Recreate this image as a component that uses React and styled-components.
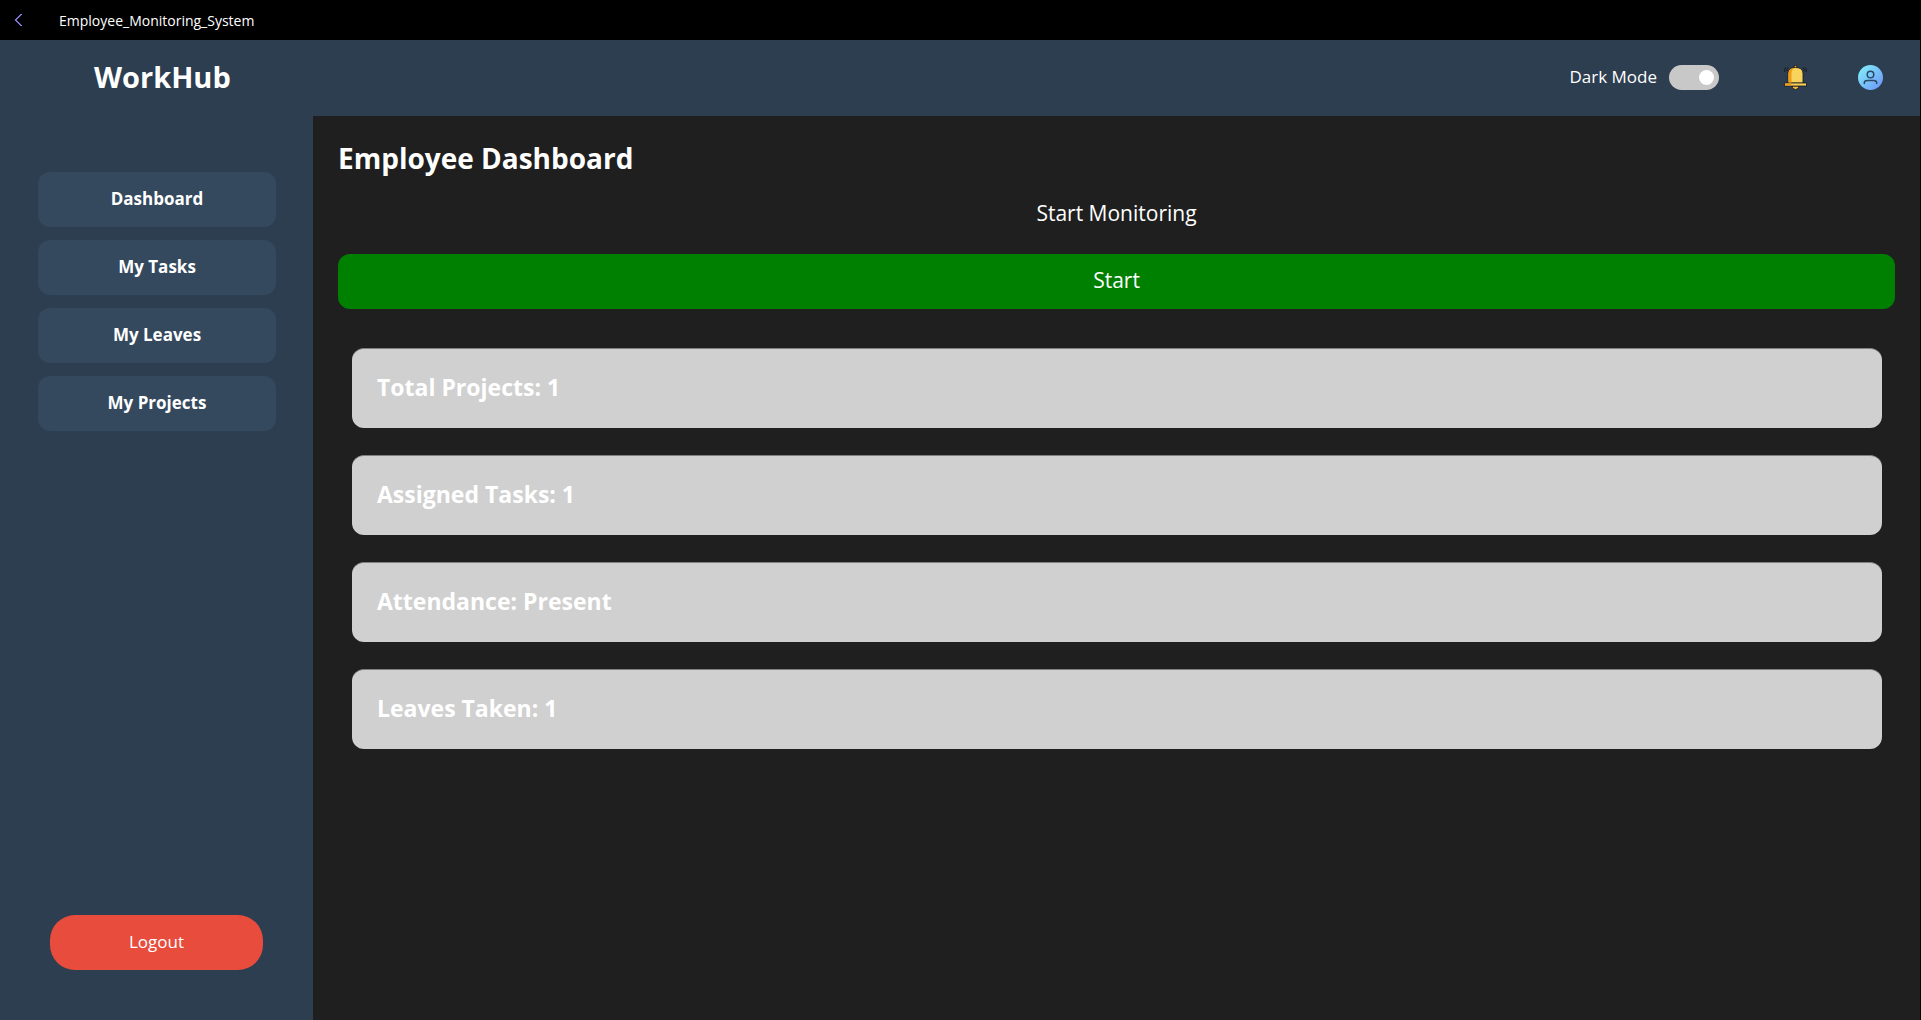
import React, { useState } from "react";
import styled, { createGlobalStyle } from "styled-components";

const GlobalStyle = createGlobalStyle`
  *, *::before, *::after { box-sizing: border-box; }
  body {
    margin: 0;
    background: #000;
    color: #fff;
    font-family: "Segoe UI", "Open Sans", "Noto Sans", sans-serif;
  }
  h1, h2, h3, p { margin: 0; }
  button { font-family: inherit; color: inherit; border: 0; cursor: pointer; }
`;

const Window = styled.div`
  display: flex;
  flex-direction: column;
  min-height: 100vh;
  padding-right: 1px;
`;

const TitleBar = styled.div`
  display: flex;
  align-items: center;
  gap: 36px;
  height: 40px;
  padding-left: 14px;
  background: #000;
  font-size: 14px;
`;

const BackButton = styled.button`
  display: flex;
  padding: 0;
  background: none;
  color: #9c92ff;
`;

const Header = styled.header`
  display: flex;
  align-items: center;
  height: 76px;
  padding: 0 37px 2px 0;
  background: #2c3e50;
`;

const Brand = styled.h1`
  width: 313px;
  padding-left: 94px;
  font-size: 29px;
  line-height: 36px;
  font-weight: 700;
`;

const HeaderTools = styled.div`
  display: flex;
  align-items: center;
  gap: 50px;
  margin-left: auto;
`;

const ToggleLabel = styled.label`
  display: flex;
  align-items: center;
  gap: 12px;
  margin-right: 14px;
  font-size: 17px;
  line-height: 24px;
`;

const Toggle = styled.input`
  appearance: none;
  display: flex;
  align-items: center;
  width: 50px;
  height: 25px;
  margin: 0;
  padding: 0 5px;
  border-radius: 13px;
  background: #c8c8c8;
  cursor: pointer;

  &::before {
    content: "";
    width: 15px;
    height: 15px;
    border-radius: 50%;
    background: #fff;
  }
  &:checked::before { margin-left: auto; }
`;

const IconButton = styled.button`
  display: flex;
  padding: 0;
  background: none;
`;

const Body = styled.div`
  display: flex;
  flex: 1;
`;

const Sidebar = styled.aside`
  display: flex;
  flex-direction: column;
  justify-content: space-between;
  width: 313px;
  padding: 56px 37px 50px 38px;
  background: #2c3e50;
`;

const Nav = styled.nav`
  display: flex;
  flex-direction: column;
  gap: 13px;
`;

const SideButton = styled.button`
  height: 55px;
  padding: 0 0 2px;
  border-radius: 12px;
  background: #34495e;
  font-size: 17px;
  line-height: 24px;
  font-weight: 700;
`;

const LogoutButton = styled(SideButton)`
  margin: 0 13px 0 12px;
  border-radius: 25px;
  background: #e74c3c;
  font-weight: 400;
`;

const Main = styled.main`
  flex: 1;
  padding: 24px 25px;
  background: #1f1f1f;
`;

const Heading = styled.h2`
  font-size: 28px;
  line-height: 36px;
  font-weight: 700;
`;

const Prompt = styled.p`
  margin: 20px 0 24px;
  font-size: 21px;
  line-height: 34px;
  text-align: center;
`;

const StartButton = styled.button`
  display: block;
  width: 100%;
  height: 55px;
  padding: 0 0 4px;
  border-radius: 12px;
  background: #008000;
  font-size: 21px;
  line-height: 30px;
`;

const Cards = styled.section`
  display: flex;
  flex-direction: column;
  gap: 27px;
  margin: 39px 13px 0 14px;
`;

const Card = styled.article`
  height: 80px;
  padding: 22px 25px;
  border-top: 1px solid #808080;
  border-radius: 12px;
  background: #d0d0d0;
`;

const CardTitle = styled.h3`
  font-size: 23px;
  line-height: 32px;
  font-weight: 700;
`;

function BackIcon() {
  return (
    <svg width="9" height="14" viewBox="0 0 9 14" fill="none" stroke="currentColor" strokeWidth="1.2" aria-hidden="true">
      <path d="M8 1.500H7L1.500 7L7 12.500H8" />
    </svg>
  );
}

function BellIcon() {
  return (
    <svg width="25" height="25" viewBox="0 0 25 25" aria-hidden="true">
      <g fill="none" stroke="#15191f" strokeWidth="1">
        <path d="M2.500 2.500Q1 4.500 2 7M5 2.500Q3.500 4 4 6M22.500 2.500Q24 4.500 23 7M20 2.500Q21.500 4 21 6" />
      </g>
      <g stroke="#15191f" strokeWidth=".8" strokeLinejoin="round">
        <circle cx="12.500" cy="1.900" r="1.500" fill="#f39c12" />
        <path d="M9.500 21h6v1.500q-1 2-3 2T9.500 22.500z" fill="#f5b53b" />
        <path d="M5 18V8.500Q5 2.500 12.500 2.500T20 8.500V18z" fill="#f9d45c" />
        <path d="M1.500 18h22v3h-22z" fill="#f9cf5a" />
      </g>
      <path d="M5.500 17.600V8.500Q5.500 3.500 11 3Q8.500 5 8.500 9V17.600zM2 18.400h6v2.200H2z" fill="#f39c12" />
    </svg>
  );
}

function AvatarIcon() {
  return (
    <svg width="25" height="25" viewBox="0 0 25 25" aria-hidden="true">
      <defs>
        <linearGradient id="avatar" x1="0" y1="0" x2="1" y2="1">
          <stop offset=".1" stopColor="#82ebf8" />
          <stop offset=".9" stopColor="#6e9bfa" />
        </linearGradient>
      </defs>
      <circle cx="12.500" cy="12.500" r="12.500" fill="url(#avatar)" />
      <g fill="none" stroke="#2c4a68" strokeWidth="1.500" strokeLinecap="round">
        <circle cx="12.500" cy="9.500" r="3.300" />
        <path d="M6.300 18.500v-.7q0-2.300 3.200-2.300h6q3.200 0 3.200 2.300v.7" />
      </g>
    </svg>
  );
}

const pages = ["Dashboard", "My Tasks", "My Leaves", "My Projects"];
const stats = ["Total Projects: 1", "Assigned Tasks: 1", "Attendance: Present", "Leaves Taken: 1"];

export default function App() {
  const [dark, setDark] = useState(true);
  return (
    <Window>
      <GlobalStyle />
      <TitleBar>
        <BackButton aria-label="Back"><BackIcon /></BackButton>
        <span>Employee_Monitoring_System</span>
      </TitleBar>
      <Header>
        <Brand>WorkHub</Brand>
        <HeaderTools>
          <ToggleLabel>
            Dark Mode
            <Toggle type="checkbox" role="switch" checked={dark} onChange={(e) => setDark(e.target.checked)} />
          </ToggleLabel>
          <IconButton aria-label="Notifications"><BellIcon /></IconButton>
          <IconButton aria-label="Profile"><AvatarIcon /></IconButton>
        </HeaderTools>
      </Header>
      <Body>
        <Sidebar>
          <Nav>
            {pages.map((page) => <SideButton key={page}>{page}</SideButton>)}
          </Nav>
          <LogoutButton>Logout</LogoutButton>
        </Sidebar>
        <Main>
          <Heading>Employee Dashboard</Heading>
          <Prompt>Start Monitoring</Prompt>
          <StartButton>Start</StartButton>
          <Cards>
            {stats.map((stat) => <Card key={stat}><CardTitle>{stat}</CardTitle></Card>)}
          </Cards>
        </Main>
      </Body>
    </Window>
  );
}
